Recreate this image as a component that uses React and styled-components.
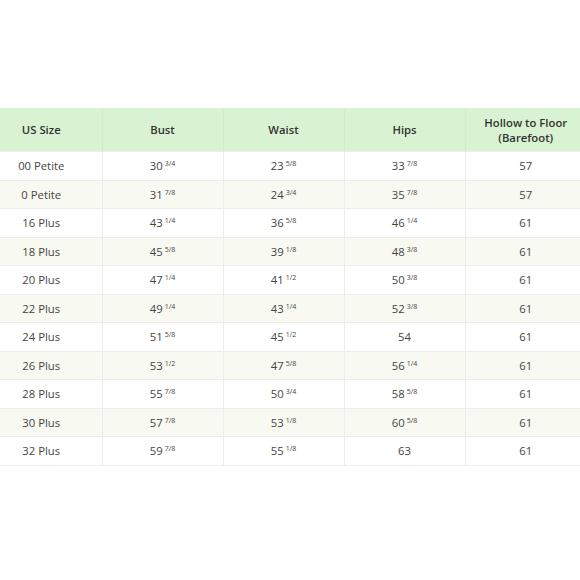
import styled, { createGlobalStyle } from 'styled-components';

const GlobalStyle = createGlobalStyle`
  html, body {
    margin: 0;
    padding: 0;
    background: #fff;
    overflow: hidden;
    font-family: "Open Sans", "Liberation Sans", sans-serif;
  }
`

const StyledWrapper = styled.div`
  width: 580px;
  height: 580px;
  padding-top: 108px;
  box-sizing: border-box;
  overflow: hidden;
`

const StyledTable = styled.table`
  width: 605px;
  margin-left: -19px;
  border-collapse: collapse;
  table-layout: fixed;
  color: #454545;
`

const StyledHeadCell = styled.th`
  height: 43px;
  padding: 0 4px;
  background-color: #d9f2d1;
  font-size: 11.3px;
  font-weight: 600;
  line-height: 15px;
  color: #333;
  text-align: center;
  border-left: 1px solid #d2ebc9;
  &:first-child {
    border-left: none;
  }
`

const StyledRow = styled.tr`
  background-color: ${(props) => (props.$even ? '#f8f9f1' : '#fff')};
`

const StyledCell = styled.td`
  height: 27.5px;
  padding: 0;
  font-size: 11.3px;
  text-align: center;
  border-top: 1px solid #ececec;
  border-left: 1px solid #ececec;
  &:first-child {
    border-left: none;
  }
  sup {
    font-size: 7px;
    margin-left: 2px;
    vertical-align: 4px;
    line-height: 0;
  }
`

const StyledLastRow = styled.tr`
  td {
    border-bottom: 1px solid #ececec;
  }
`

const columns = ['US Size', 'Bust', 'Waist', 'Hips', 'Hollow to Floor (Barefoot)'];

const rows = [
  ['00 Petite', '30 3/4', '23 5/8', '33 7/8', '57'],
  ['0 Petite', '31 7/8', '24 3/4', '35 7/8', '57'],
  ['16 Plus', '43 1/4', '36 5/8', '46 1/4', '61'],
  ['18 Plus', '45 5/8', '39 1/8', '48 3/8', '61'],
  ['20 Plus', '47 1/4', '41 1/2', '50 3/8', '61'],
  ['22 Plus', '49 1/4', '43 1/4', '52 3/8', '61'],
  ['24 Plus', '51 5/8', '45 1/2', '54', '61'],
  ['26 Plus', '53 1/2', '47 5/8', '56 1/4', '61'],
  ['28 Plus', '55 7/8', '50 3/4', '58 5/8', '61'],
  ['30 Plus', '57 7/8', '53 1/8', '60 5/8', '61'],
  ['32 Plus', '59 7/8', '55 1/8', '63', '61'],
];

function Measure({ value }) {
  const [whole, fraction] = value.split(' ');
  return (
    <>
      {whole}
      {fraction && <sup>{fraction}</sup>}
    </>
  );
}

function App() {
  return (
    <StyledWrapper>
      <GlobalStyle />
      <StyledTable>
        <thead>
          <tr>
            {columns.map((title) => (
              <StyledHeadCell key={title}>
                {title === 'Hollow to Floor (Barefoot)' ? (
                  <>Hollow to Floor<br />(Barefoot)</>
                ) : title}
              </StyledHeadCell>
            ))}
          </tr>
        </thead>
        <tbody>
          {rows.map((row, i) => {
            const Row = i === rows.length - 1 ? StyledLastRow : 'tr';
            return (
              <StyledRow as={Row} key={row[0]} $even={i % 2 === 1}>
                {row.map((value, j) => (
                  <StyledCell key={j}>
                    {j === 0 ? value : <Measure value={value} />}
                  </StyledCell>
                ))}
              </StyledRow>
            );
          })}
        </tbody>
      </StyledTable>
    </StyledWrapper>
  );
}

export default App;
